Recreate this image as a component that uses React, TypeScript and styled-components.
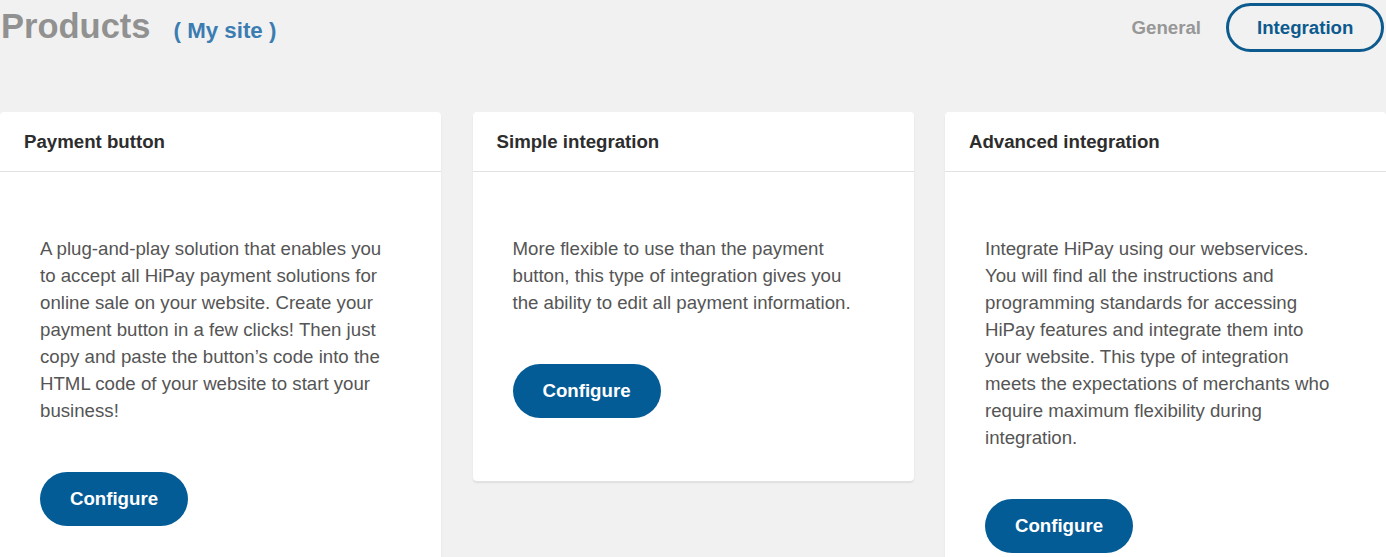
import React from "react";
import styled, { createGlobalStyle } from "styled-components";

const GlobalStyle = createGlobalStyle`
  html, body {
    margin: 0;
    padding: 0;
    background: #f1f1f1;
    font-family: "Liberation Sans", Arial, sans-serif;
  }
  * { box-sizing: border-box; }
`;

const Page = styled.div`
  padding-top: 3px;
  min-height: 557px;
`;

const TopBar = styled.header`
  display: flex;
  justify-content: space-between;
  align-items: center;
  height: 49px;
`;

const TitleGroup = styled.div`
  display: flex;
  align-items: baseline;
  gap: 23px;
  padding-left: 1px;
  margin-top: -2px;
`;

const PageTitle = styled.h1`
  margin: 0;
  font-size: 34.5px;
  line-height: 1;
  font-weight: 700;
  color: #919191;
`;

const SiteName = styled.span`
  font-size: 22.3px;
  font-weight: 700;
  color: #3b7cb1;
`;

const Tabs = styled.nav`
  display: flex;
  align-items: center;
  gap: 22px;
  padding-right: 2px;
`;

const Tab = styled.button<{ $active?: boolean }>`
  font-family: inherit;
  font-size: 18.67px;
  font-weight: 700;
  background: transparent;
  cursor: pointer;
  height: 49px;
  border-radius: 25px;
  border: 3px solid ${(p) => (p.$active ? "#0d5a8e" : "transparent")};
  color: ${(p) => (p.$active ? "#0d5a8e" : "#979797")};
  padding: ${(p) => (p.$active ? "0 28px" : "0")};
  width: ${(p) => (p.$active ? "158px" : "auto")};
`;

const Cards = styled.section`
  display: grid;
  grid-template-columns: repeat(3, 1fr);
  column-gap: 31.5px;
  align-items: start;
  margin-top: 60px;
`;

const Card = styled.article`
  background: #fff;
  border-radius: 4px;
  box-shadow: 0 2px 2px rgba(0, 0, 0, 0.08);
`;

const CardHeader = styled.div`
  height: 60px;
  display: flex;
  align-items: center;
  padding: 1px 24px 0;
  border-bottom: 1px solid #e1e1e1;
`;

const CardTitle = styled.h2`
  margin: 0;
  font-size: 18.67px;
  font-weight: 700;
  color: #2d2d2d;
`;

const CardBody = styled.div`
  padding: 63px 50px 63px 40px;
`;

const Description = styled.p`
  margin: 0;
  font-size: 18.67px;
  line-height: 27px;
  color: #555;
`;

const ConfigureButton = styled.button`
  margin-top: 48px;
  width: 148px;
  height: 54px;
  border: none;
  border-radius: 27px;
  background: #045c96;
  color: #fff;
  font-family: inherit;
  font-size: 18.67px;
  font-weight: 700;
  cursor: pointer;
`;

const cards = [
  {
    title: "Payment button",
    text: "A plug-and-play solution that enables you to accept all HiPay payment solutions for online sale on your website. Create your payment button in a few clicks! Then just copy and paste the button\u2019s code into the HTML code of your website to start your business!",
  },
  {
    title: "Simple integration",
    text: "More flexible to use than the payment button, this type of integration gives you the ability to edit all payment information.",
  },
  {
    title: "Advanced integration",
    text: "Integrate HiPay using our webservices. You will find all the instructions and programming standards for accessing HiPay features and integrate them into your website. This type of integration meets the expectations of merchants who require maximum flexibility during integration.",
  },
];

export default function App() {
  return (
    <>
      <GlobalStyle />
      <Page>
        <TopBar>
          <TitleGroup>
            <PageTitle>Products</PageTitle>
            <SiteName>( My site )</SiteName>
          </TitleGroup>
          <Tabs>
            <Tab>General</Tab>
            <Tab $active>Integration</Tab>
          </Tabs>
        </TopBar>
        <Cards>
          {cards.map((c) => (
            <Card key={c.title}>
              <CardHeader>
                <CardTitle>{c.title}</CardTitle>
              </CardHeader>
              <CardBody>
                <Description>{c.text}</Description>
                <ConfigureButton>Configure</ConfigureButton>
              </CardBody>
            </Card>
          ))}
        </Cards>
      </Page>
    </>
  );
}
